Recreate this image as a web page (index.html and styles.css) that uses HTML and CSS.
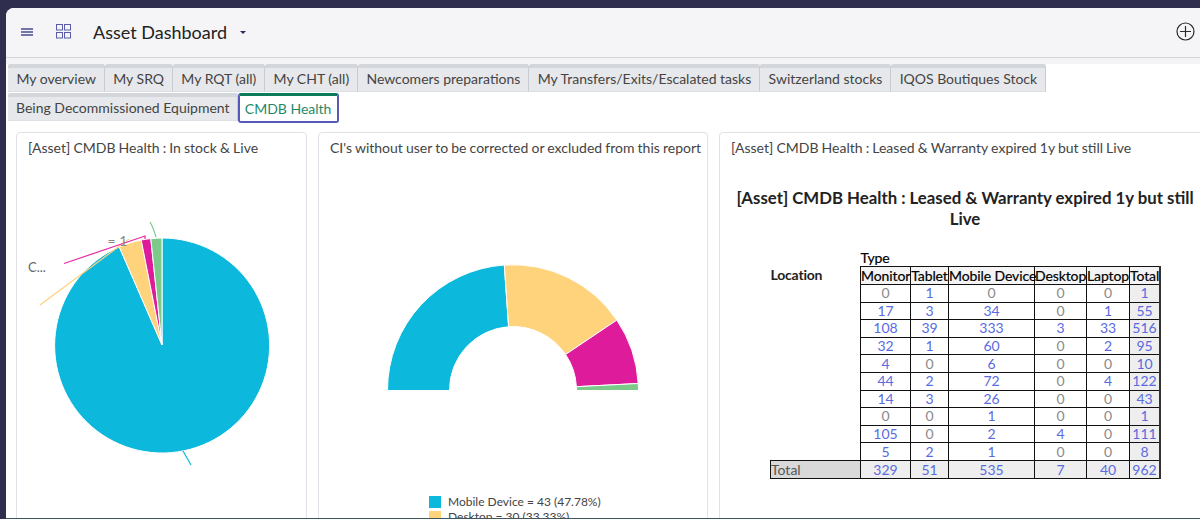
FILE: index.html
```html
<!DOCTYPE html>
<html lang="en">
<head>
    <meta charset="UTF-8">
    <title>Asset Dashboard</title>
    <link rel="stylesheet" href="styles.css">
</head>
<body>

    <div class="app">
        <header class="topbar">
            <svg class="icon-menu" width="12" height="8" viewBox="0 0 12 8">
                <path d="M0 1h12M0 4h12M0 7h12" stroke="#484c8c" stroke-width="1.4" fill="none"/>
            </svg>
            <svg class="icon-grid" width="15" height="15" viewBox="0 0 15 15">
                <g fill="none" stroke="#5a5cab" stroke-width="1">
                    <rect x=".5" y=".5" width="6" height="5.5"/>
                    <rect x="8.5" y=".5" width="6" height="5.5"/>
                    <rect x=".5" y="8.5" width="6" height="5.5"/>
                    <rect x="8.5" y="8.5" width="6" height="5.5"/>
                </g>
            </svg>
            <h1 class="page-title">Asset Dashboard</h1>
            <span class="caret"></span>
            <svg class="icon-add" width="19" height="19" viewBox="0 0 19 19">
                <circle cx="9.5" cy="9.5" r="8.5" fill="none" stroke="#2b2b2b" stroke-width="1.2"/>
                <path d="M9.5 4v11M4 9.5h11" stroke="#2b2b2b" stroke-width="1.2" fill="none"/>
            </svg>
        </header>

        <nav class="tabs">
            <div class="tab-row">
                <a class="tab">My overview</a>
                <a class="tab">My SRQ</a>
                <a class="tab">My RQT (all)</a>
                <a class="tab">My CHT (all)</a>
                <a class="tab">Newcomers preparations</a>
                <a class="tab">My Transfers/Exits/Escalated tasks</a>
                <a class="tab">Switzerland stocks</a>
                <a class="tab">IQOS Boutiques Stock</a>
            </div>
            <div class="tab-row tab-row-second">
                <a class="tab">Being Decommissioned Equipment</a>
                <a class="tab active">CMDB Health</a>
            </div>
        </nav>

        <main class="cards">
            <section class="card card-pie">
                <h2 class="card-title">[Asset] CMDB Health : In stock &amp; Live</h2>
                <!-- viewBox is in page pixels, easier to line up against the screenshot -->
                <svg class="chart" width="289" height="353" viewBox="17 165 289 353">
                    <g stroke="#fff" stroke-width="1">
                        <path fill="#0cb8dc" d="M162 345L162 238A107.500 107.500 0 1 1 119.3 246.9Z"/>
                        <path fill="#ffd27c" d="M162 345L119.3 246.9A107 107 0 0 1 141.2 240Z"/>
                        <path fill="#de1b9b" d="M162 345L141.2 240A107 107 0 0 1 150.8 238.6Z"/>
                        <path fill="#7cca8a" d="M162 345L150.8 238.6A107 107 0 0 1 162 238Z"/>
                    </g>
                    <g fill="none" stroke-width="1.2">
                        <path stroke="#ffd27c" d="M40 305L129 239"/>
                        <path stroke="#e52ba6" d="M64 263.500L145 236V239"/>
                        <path stroke="#7cca8a" d="M150 222Q153 227 156 237"/>
                        <path stroke="#0cb8dc" d="M183 451L191 465"/>
                    </g>
                    <text class="pie-label" x="28" y="272">C...</text>
                    <text class="pie-label faint" x="107.500" y="246">= 1</text>
                </svg>
            </section>

            <section class="card card-donut">
                <h2 class="card-title">CI's without user to be corrected or excluded from this report</h2>
                <svg class="chart" width="388" height="326" viewBox="319 165 388 326">
                    <g stroke="#fff" stroke-width="1">
                        <path fill="#0cb8dc" d="M387.500 390.500A125.500 125.500 0 0 1 504.3 265L508.6 326.7A63.5 63.5 0 0 0 449.5 390.500Z"/>
                        <path fill="#ffd27c" d="M504.3 265A125.500 125.500 0 0 1 616.8 320.100L565.6 354.5A63.5 63.5 0 0 0 508.6 326.7Z"/>
                        <path fill="#de1b9b" d="M616.8 320.100A125.500 125.500 0 0 1 638.200 383.500L576.4 386.7A63.5 63.5 0 0 0 565.6 354.5Z"/>
                        <path fill="#7cca8a" d="M638.200 383.500A125.500 125.500 0 0 1 638.500 390.500H576.5L576.4 386.7Z"/>
                    </g>
                </svg>
                <ul class="legend">
                    <li class="legend-item"><span class="swatch swatch-mobile"></span>Mobile Device = 43 (47.78%)</li>
                    <li class="legend-item"><span class="swatch swatch-desktop"></span>Desktop = 30 (33.33%)</li>
                </ul>
            </section>

            <section class="card card-table">
                <h2 class="card-title">[Asset] CMDB Health : Leased &amp; Warranty expired 1y but still Live</h2>
                <h3 class="report-title">[Asset] CMDB Health : Leased &amp; Warranty expired 1y but still Live</h3>
                <table class="report">
                    <colgroup>
                        <col class="c-loc"><col class="c-mon"><col class="c-tab"><col class="c-mob"><col class="c-desk"><col class="c-lap"><col class="c-tot">
                    </colgroup>
                    <thead>
                        <tr>
                            <th class="loc-head" rowspan="2">Location</th>
                            <th class="type-head" colspan="6">Type</th>
                        </tr>
                        <tr class="cols">
                            <th>Monitor</th><th>Tablet</th><th>Mobile Device</th><th>Desktop</th><th>Laptop</th><th>Total</th>
                        </tr>
                    </thead>
                    <tbody>
                        <tr><td class="blank"></td><td class="z">0</td><td>1</td><td class="z">0</td><td class="z">0</td><td class="z">0</td><td class="tot">1</td></tr>
                        <tr><td class="blank"></td><td>17</td><td>3</td><td>34</td><td class="z">0</td><td>1</td><td class="tot">55</td></tr>
                        <tr><td class="blank"></td><td>108</td><td>39</td><td>333</td><td>3</td><td>33</td><td class="tot">516</td></tr>
                        <tr><td class="blank"></td><td>32</td><td>1</td><td>60</td><td class="z">0</td><td>2</td><td class="tot">95</td></tr>
                        <tr><td class="blank"></td><td>4</td><td class="z">0</td><td>6</td><td class="z">0</td><td class="z">0</td><td class="tot">10</td></tr>
                        <tr><td class="blank"></td><td>44</td><td>2</td><td>72</td><td class="z">0</td><td>4</td><td class="tot">122</td></tr>
                        <tr><td class="blank"></td><td>14</td><td>3</td><td>26</td><td class="z">0</td><td class="z">0</td><td class="tot">43</td></tr>
                        <tr><td class="blank"></td><td class="z">0</td><td class="z">0</td><td>1</td><td class="z">0</td><td class="z">0</td><td class="tot">1</td></tr>
                        <tr><td class="blank"></td><td>105</td><td class="z">0</td><td>2</td><td>4</td><td class="z">0</td><td class="tot">111</td></tr>
                        <tr><td class="blank"></td><td>5</td><td>2</td><td>1</td><td class="z">0</td><td class="z">0</td><td class="tot">8</td></tr>
                    </tbody>
                    <tfoot>
                        <tr class="foot-row"><td class="foot-label">Total</td><td class="tot">329</td><td class="tot">51</td><td class="tot">535</td><td class="tot">7</td><td class="tot">40</td><td class="tot">962</td></tr>
                    </tfoot>
                </table>
            </section>
        </main>
    </div>

</body>
</html>
```

FILE: styles.css
```css
* {
    box-sizing: border-box;
}
html, body {
    height: 100%;
}
body {
    margin: 0;
    padding: 8px 0 0 6px;
    overflow: hidden;
    background-color: #2f2e4f;
    font-family: Lato, "Open Sans", sans-serif;
    color: #333;
}
.app {
    height: 511px;
    border-top-left-radius: 8px;
    border-bottom: 1px solid #3f5560;
    background-color: #fff;
    overflow: hidden;
}

.topbar {
    display: flex;
    align-items: center;
    height: 50px;
    padding: 0 5px 2px 15px;
    border-bottom: 1px solid #d6d6da;
    background-color: #f5f5f7;
}
.icon-menu {
    margin-right: 23px;
}
.icon-grid {
    margin-right: 22px;
}
.page-title {
    margin: 0;
    font-size: 18px;
    font-weight: 400;
    color: #222;
}
.caret {
    width: 0;
    height: 0;
    margin: 1px 0 0 13px;
    border-left: 3px solid transparent;
    border-right: 3px solid transparent;
    border-top: 3px solid #2b2c55;
}
.icon-add {
    margin-left: auto;
}

.tabs {
    padding: 6px 0 0 2px;
    background: linear-gradient(#f4f4f6 6px, #fff 6px);
}
.tab-row {
    display: flex;
    height: 29px;
}
.tab-row-second {
    margin-left: -0.5px;
}
.tab {
    display: flex;
    align-items: center;
    height: 28px;
    padding: 0 7.8px 3px 8.5px;
    border-top: 4px solid #d3d6db;
    border-right: 1px solid #c8cbd0;
    border-bottom: 1px solid #dcdfe3;
    border-top-left-radius: 2px;
    border-top-right-radius: 2px;
    background-color: #e6e8eb;
    font-size: 14px;
    color: #444;
    white-space: nowrap;
}
.tab.active {
    height: 30px;
    margin-left: -0.5px;
    padding: 0 6px 1px 5px;
    border: 2px solid #5559ba;
    border-top: 3px solid #0a7c5c;
    border-radius: 3px;
    background-color: #fff;
    color: #1f8a6a;
}

.cards {
    display: flex;
    gap: 11px;
    padding: 10px 0 0 10px;
}
.card {
    flex-shrink: 0;
    height: 400px;
    border: 1px solid #e0e0e6;
    border-radius: 4px;
    background-color: #fff;
    overflow: hidden;
}
.card-pie {
    width: 291px;
}
.card-donut {
    width: 390px;
}
.card-table {
    width: 520px;
}
.card-title {
    height: 32px;
    margin: 0;
    padding: 7px 0 0 11px;
    font-size: 14px;
    font-weight: 400;
    line-height: 16px;
    word-spacing: -0.45px;
    color: #444;
    white-space: nowrap;
}
.chart {
    display: block;
}
.pie-label {
    font-size: 13px;
    fill: #666;
}
.pie-label.faint {
    font-size: 14px;
    fill: #888;
}

.legend {
    margin: 3px 0 0 110px;
    padding: 0;
    list-style: none;
}
.legend-item {
    display: flex;
    align-items: center;
    gap: 7px;
    height: 15px;
    font-size: 12px;
    color: #444;
    white-space: nowrap;
}
.swatch {
    flex-shrink: 0;
    width: 12px;
    height: 12px;
}
.swatch-mobile {
    background-color: #0cb8dc;
}
.swatch-desktop {
    background-color: #ffd27c;
}

.report-title {
    width: 490px;
    margin: 22px 0 21px;
    font-size: 16.8px;
    font-weight: 700;
    line-height: 21px;
    text-align: center;
    color: #222;
}
.report {
    width: 389.5px;
    margin-left: 50px;
    border-collapse: collapse;
    table-layout: fixed;
    font-size: 14px;
    line-height: 16px;
}
.c-loc { width: 90px; }
.c-mon { width: 50px; }
.c-tab { width: 38px; }
.c-mob { width: 86px; }
.c-desk { width: 52px; }
.c-lap { width: 43px; }
.c-tot { width: 30.5px; }
.report th {
    padding: 0;
    font-weight: 400;
    letter-spacing: -0.1px;
    color: #000;
    white-space: nowrap;
    -webkit-text-stroke: 0.2px #000;
}
.report td {
    height: 17.6px;
    padding: 0;
    border: 1px solid #111;
    text-align: center;
    color: #5a6be0;
}
.report th.loc-head {
    padding-bottom: 2px;
    vertical-align: bottom;
    text-align: left;
    font-weight: 700;
    letter-spacing: -0.2px;
    color: #222;
    -webkit-text-stroke: 0;
}
.type-head {
    text-align: left;
    height: 15px;
}
.cols th {
    height: 18px;
    border: 1px solid #111;
    background-color: #f4f4f4;
}
.cols th:last-child,
.report td.tot:last-child {
    border-right: 2px solid #333;
}
.report td.blank {
    border: none;
    border-right: 1px solid #111;
}
.report td.z {
    color: #8a8a8a;
}
.report td.tot {
    background-color: #eee;
}
.report td.foot-label {
    background-color: #d9d9d9;
    text-align: left;
    color: #555;
}
.foot-row td {
    padding-top: 1px;
}
```
